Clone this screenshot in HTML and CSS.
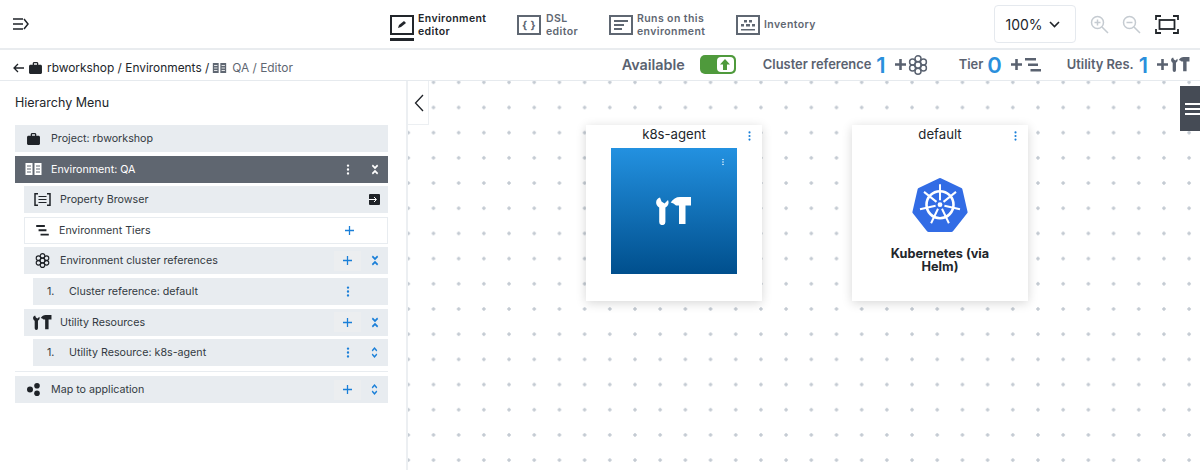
FILE: index.html
```html
<!doctype html>
<html lang="en">
<head>
    <meta charset="UTF-8">
    <title>Environment editor</title>
    <link rel="stylesheet" href="styles.css">
</head>
<body>
<svg class="defs" width="0" height="0">
    <symbol id="i-case" viewBox="0 0 14 13"><path d="M5 0h4l1 1v2h3l1 1v8l-1 1H1l-1-1V4l1-1h3V1zM5.400 1.300V3h3.200V1.300z" fill="currentColor" fill-rule="evenodd"/></symbol>
    <symbol id="i-env" viewBox="0 0 16 12"><path d="M0 0h7v12H0zM9 0h7v12H9z" fill="currentColor"/><path d="M1.500 3h4M1.500 6h4M1.500 9h4M10.500 3h4M10.500 6h4M10.500 9h4" stroke="var(--gap, #fff)" stroke-width="1"/></symbol>
    <symbol id="i-cluster" viewBox="0 0 20 20" fill="none" stroke="currentColor" stroke-width="1.500"><circle cx="10" cy="10" r="3.200"/><circle cx="10" cy="3.800" r="3"/><circle cx="10" cy="16.200" r="3"/><circle cx="4.600" cy="6.900" r="3"/><circle cx="15.400" cy="6.900" r="3"/><circle cx="4.600" cy="13.100" r="3"/><circle cx="15.400" cy="13.100" r="3"/></symbol>
    <symbol id="i-tiers" viewBox="0 0 16 14"><path d="M0 0h11v2.500H0zM3 5.500h10V8H3zM5.500 11H16v2.500H5.500z" fill="currentColor"/></symbol>
    <symbol id="i-tools" viewBox="0 0 36 28"><path d="M4 .5C-1 2-1 8 3.200 10.500V25a3.100 3.100 0 0 0 6.200 0V10.500C13 9 13 5 12 3L8.500 6.500 5.500 4.500zM14.700 5.500C17 2 20 0 24 0H35V8.500H29.500V27H23V8.500H20Q17.500 6 14.700 5.500z" fill="currentColor"/></symbol>
    <symbol id="i-plus" viewBox="0 0 12 12"><path d="M6 0v12M0 6h12" stroke="currentColor" stroke-width="1.700" fill="none"/></symbol>
    <symbol id="i-plus-bold" viewBox="0 0 12 12"><path d="M6 0v12M0 6h12" stroke="currentColor" stroke-width="2.800" fill="none"/></symbol>
    <symbol id="i-dots" viewBox="0 0 4 14"><circle cx="2" cy="2" r="1.500" fill="currentColor"/><circle cx="2" cy="7" r="1.500" fill="currentColor"/><circle cx="2" cy="12" r="1.500" fill="currentColor"/></symbol>
    <symbol id="i-collapse" viewBox="0 0 12 14"><path d="M2 1.500l4 3.500 4-3.500M2 12.500l4-3.500 4 3.500" stroke="currentColor" stroke-width="2.400" fill="none"/></symbol>
    <symbol id="i-expand" viewBox="0 0 12 14"><path d="M2 5L6 1.500 10 5M2 9l4 3.500L10 9" stroke="currentColor" stroke-width="2.200" fill="none"/></symbol>
</svg>

<header class="topbar">
    <svg class="menu-icon" width="16" height="12" viewBox="0 0 16 12"><path d="M0 1h10M0 6h10M0 11h10M11 1l4 5-4 5" stroke="#1f2328" stroke-width="1.500" fill="none"/></svg>
    <nav class="tabs">
        <a class="tab tab-active tab-env">
            <svg width="24" height="20" viewBox="0 0 24 20"><rect x="1" y="1" width="22" height="18" fill="none" stroke="currentColor" stroke-width="2"/><path d="M8 13l1-3 5-4 2 2-5 4z" fill="currentColor"/></svg>
            <span>Environment<br>editor</span>
        </a>
        <a class="tab tab-dsl">
            <svg width="24" height="20" viewBox="0 0 24 20"><rect x="1" y="1" width="22" height="18" fill="none" stroke="currentColor" stroke-width="2"/><text x="12" y="14" text-anchor="middle" class="brace">{ }</text></svg>
            <span>DSL<br>editor</span>
        </a>
        <a class="tab tab-runs">
            <svg width="24" height="20" viewBox="0 0 24 20"><rect x="1" y="1" width="22" height="18" fill="none" stroke="currentColor" stroke-width="2"/><path d="M5 6h14M5 10h10M5 14h8" stroke="currentColor" stroke-width="2"/></svg>
            <span>Runs on this<br>environment</span>
        </a>
        <a class="tab tab-inv">
            <svg width="24" height="20" viewBox="0 0 24 20"><rect x="1" y="1" width="22" height="18" fill="none" stroke="currentColor" stroke-width="2"/><path d="M8 5h3v2.500H8zM13 5h3v2.500h-3zM5 9h3v2.500H5zM10 9h4v2.500h-4zM16 9h3v2.500h-3zM5 14h14v1.500H5z" fill="currentColor"/></svg>
            <span>Inventory</span>
        </a>
    </nav>
    <div class="zoom-tools">
        <div class="zoom-select">100%
            <svg width="11" height="7" viewBox="0 0 11 7"><path d="M1 1l4.500 4.500L10 1" stroke="#1f2328" stroke-width="1.600" fill="none"/></svg>
        </div>
        <svg class="zoom-btn" width="19" height="19" viewBox="0 0 19 19"><circle cx="7.500" cy="7.500" r="6" fill="none" stroke="currentColor" stroke-width="1.500"/><path d="M12 12l6 6M7.500 4.500v6M4.500 7.500h6" stroke="currentColor" stroke-width="1.500"/></svg>
        <svg class="zoom-btn" width="19" height="19" viewBox="0 0 19 19"><circle cx="7.500" cy="7.500" r="6" fill="none" stroke="currentColor" stroke-width="1.500"/><path d="M12 12l6 6M4.500 7.500h6" stroke="currentColor" stroke-width="1.500"/></svg>
        <svg class="fit-btn" width="24" height="19" viewBox="0 0 24 19"><path d="M1 5V1h5M18 1h5v4M23 14v4h-5M6 18H1v-4" fill="none" stroke="currentColor" stroke-width="1.800"/><rect x="4.500" y="5" width="15" height="9" fill="none" stroke="currentColor" stroke-width="1.800"/></svg>
    </div>
</header>

<div class="subbar">
    <div class="crumbs">
        <svg class="back" width="11" height="10" viewBox="0 0 11 10"><path d="M5 1L1 5l4 4M1 5h10" stroke="#1f2328" stroke-width="1.300" fill="none"/></svg>
        <svg class="ic-case" width="13" height="12"><use href="#i-case"/></svg>
        <span>rbworkshop / Environments /</span>
        <svg class="ic-env-crumb" width="15" height="10"><use href="#i-env"/></svg>
        <span class="crumb-muted">QA / Editor</span>
    </div>
    <div class="stats">
        <span class="avail">Available</span>
        <span class="toggle"><span class="knob"><svg width="10" height="11" viewBox="0 0 10 11"><path d="M5 0l5 5.500H7V11H3V5.500H0z" fill="#4f9a3c"/></svg></span></span>
        <span class="stat">Cluster reference</span>
        <b class="count">1</b>
        <svg class="stat-plus plus-tight" width="11" height="11"><use href="#i-plus-bold"/></svg>
        <svg class="stat-ic" width="20" height="20"><use href="#i-cluster"/></svg>
        <span class="stat stat-tier">Tier</span>
        <b class="count count-tier">0</b>
        <svg class="stat-plus" width="11" height="11"><use href="#i-plus-bold"/></svg>
        <svg class="stat-ic" width="16" height="14"><use href="#i-tiers"/></svg>
        <span class="stat stat-util">Utility Res.</span>
        <b class="count">1</b>
        <svg class="stat-plus" width="11" height="11"><use href="#i-plus-bold"/></svg>
        <svg class="stat-ic" width="19" height="15"><use href="#i-tools"/></svg>
    </div>
</div>

<main class="workspace">
    <aside class="sidebar">
        <h2 class="side-title">Hierarchy Menu</h2>
        <ul class="tree">
            <li class="row lv0">
                <span class="ic-slot"><svg width="13" height="12"><use href="#i-case"/></svg></span>
                <span>Project: rbworkshop</span>
            </li>
            <li class="row lv0 row-dark">
                <span class="ic-slot"><svg width="17" height="12"><use href="#i-env"/></svg></span>
                <span>Environment: QA</span>
                <span class="acts">
                    <span class="act"><svg width="4" height="11" viewBox="0 0 4 14"><use href="#i-dots"/></svg></span>
                    <span class="act"><svg width="8" height="11" viewBox="0 0 12 14" preserveAspectRatio="none"><use href="#i-collapse"/></svg></span>
                </span>
            </li>
            <li class="row lv1">
                <span class="ic-slot"><svg width="17" height="13" viewBox="0 0 17 13"><path d="M4 .8H1v11.400h3M13 .8h3v11.400h-3" fill="none" stroke="currentColor" stroke-width="1.500"/><path d="M4.500 3.500h8M4.500 6.500h8M4.500 9.500h8" stroke="currentColor"/></svg></span>
                <span>Property Browser</span>
                <span class="acts">
                    <span class="act"></span>
                    <span class="act"><svg width="11" height="11" viewBox="0 0 11 11"><rect width="11" height="11" rx="1" fill="#1f2328"/><path d="M0 5.500h7M5 3l2.500 2.500L5 8" stroke="#fff" fill="none"/></svg></span>
                </span>
            </li>
            <li class="row lv1 row-white">
                <span class="ic-slot"><svg width="13" height="11"><use href="#i-tiers"/></svg></span>
                <span>Environment Tiers</span>
                <span class="acts acts-tier">
                    <span class="act blue"><svg width="9" height="9"><use href="#i-plus"/></svg></span>
                </span>
            </li>
            <li class="row lv1">
                <span class="ic-slot"><svg width="15" height="15"><use href="#i-cluster"/></svg></span>
                <span>Environment cluster references</span>
                <span class="acts">
                    <span class="act blue act-hover"><svg width="9" height="9"><use href="#i-plus"/></svg></span>
                    <span class="act blue"><svg width="8" height="11" viewBox="0 0 12 14" preserveAspectRatio="none"><use href="#i-collapse"/></svg></span>
                </span>
            </li>
            <li class="row lv2">
                <span class="num">1.</span>
                <span>Cluster reference: default</span>
                <span class="acts">
                    <span class="act blue"><svg width="4" height="11" viewBox="0 0 4 14"><use href="#i-dots"/></svg></span>
                    <span class="act"></span>
                </span>
            </li>
            <li class="row lv1">
                <span class="ic-slot"><svg width="19" height="15"><use href="#i-tools"/></svg></span>
                <span>Utility Resources</span>
                <span class="acts">
                    <span class="act blue act-hover"><svg width="9" height="9"><use href="#i-plus"/></svg></span>
                    <span class="act blue"><svg width="8" height="11" viewBox="0 0 12 14" preserveAspectRatio="none"><use href="#i-collapse"/></svg></span>
                </span>
            </li>
            <li class="row lv2">
                <span class="num">1.</span>
                <span>Utility Resource: k8s-agent</span>
                <span class="acts">
                    <span class="act blue"><svg width="4" height="11" viewBox="0 0 4 14"><use href="#i-dots"/></svg></span>
                    <span class="act blue"><svg width="7" height="11" viewBox="0 0 12 14" preserveAspectRatio="none"><use href="#i-expand"/></svg></span>
                </span>
            </li>
            <li class="tree-sep"></li>
            <li class="row lv0">
                <span class="ic-slot"><svg width="13" height="13" viewBox="0 0 13 13"><circle cx="3" cy="6.500" r="3" fill="currentColor"/><circle cx="10" cy="2.800" r="2.800" fill="currentColor"/><circle cx="10" cy="10.200" r="2.800" fill="currentColor"/></svg></span>
                <span>Map to application</span>
                <span class="acts">
                    <span class="act blue act-hover"><svg width="9" height="9"><use href="#i-plus"/></svg></span>
                    <span class="act blue"><svg width="7" height="11" viewBox="0 0 12 14" preserveAspectRatio="none"><use href="#i-expand"/></svg></span>
                </span>
            </li>
        </ul>
    </aside>

    <section class="canvas">
        <button class="side-toggle"><svg width="10" height="18" viewBox="0 0 10 18"><path d="M9 1L1.500 9 9 17" stroke="#1f2328" stroke-width="1.300" fill="none"/></svg></button>
        <button class="panel-tab"><i></i><i></i><i></i></button>

        <div class="node node-agent">
            <div class="node-title">k8s-agent</div>
            <svg class="node-dots" width="3" height="10" viewBox="0 0 4 14"><use href="#i-dots"/></svg>
            <div class="agent-tile">
                <svg class="tile-dots" width="2" height="8" viewBox="0 0 4 14"><use href="#i-dots"/></svg>
                <svg width="36" height="28"><use href="#i-tools"/></svg>
            </div>
        </div>

        <div class="node node-default">
            <div class="node-title">default</div>
            <svg class="node-dots" width="3" height="10" viewBox="0 0 4 14"><use href="#i-dots"/></svg>
            <div class="helm">
                <svg width="58" height="56" viewBox="0 0 58 56">
                    <polygon points="29,3 49.500,12.900 54.600,35.100 40.400,52.900 17.600,52.900 3.400,35.100 8.500,12.900" fill="#326ce5" stroke="#326ce5" stroke-width="4" stroke-linejoin="round"/>
                    <circle cx="29" cy="27.700" r="13.500" fill="none" stroke="#fff" stroke-width="2.600"/>
                    <path d="M29 23.200V7.200M32.500 24.900L45 14.900M33.400 28.700L49 32.300M31 31.800L37.900 46.200M27 31.800L20.100 46.200M24.600 28.700L9 32.300M25.500 24.900L13 14.900" stroke="#fff" stroke-width="2" fill="none"/>
                    <circle cx="29" cy="27.700" r="2.400" fill="#fff"/>
                </svg>
                <div class="helm-name">Kubernetes (via Helm)</div>
            </div>
        </div>
    </section>
</main>
</body>
</html>
```

FILE: styles.css
```css
* {
    box-sizing: border-box;
}
html, body {
    margin: 0;
    height: 470px;
    overflow: hidden;
}
body {
    font-family: Inter, "Liberation Sans", sans-serif;
    color: #22262b;
    background: #fff;
}
.defs {
    position: absolute;
}

/* top bar */
.topbar {
    height: 50px;
    display: flex;
    align-items: center;
    border-bottom: 2px solid #e9ecef;
    padding-left: 13px;
}
.menu-icon {
    flex: none;
}
.tabs {
    display: flex;
    margin-left: 361px;
    height: 48px;
}
.tab {
    display: flex;
    align-items: center;
    gap: 4px;
    height: 48px;
    padding-top: 1px;
    font-size: 10.5px;
    line-height: 13px;
    font-weight: 600;
    letter-spacing: .4px;
    color: #5f6772;
    position: relative;
}
.tab svg {
    flex: none;
}
.tab-env {
    width: 127px;
}
.tab-dsl {
    width: 92px;
}
.tab-dsl span {
    margin-left: 1px;
}
.tab-runs {
    width: 127px;
}
.tab-active {
    color: #22262b;
}
.tab-active::after {
    content: "";
    position: absolute;
    left: 0;
    bottom: 7px;
    width: 24px;
    height: 3px;
    background: #22262b;
}
.brace {
    font-size: 11px;
    font-weight: 700;
    fill: currentColor;
}
.zoom-tools {
    margin-left: auto;
    display: flex;
    align-items: center;
    padding-right: 21px;
}
.zoom-select {
    width: 82px;
    height: 38px;
    border: 1px solid #e5e9ee;
    border-radius: 4px;
    display: flex;
    align-items: center;
    justify-content: center;
    gap: 6px;
    padding-right: 5px;
    font-size: 14px;
    margin-right: 14px;
}
.zoom-btn {
    color: #c5cbd1;
    margin-right: 13px;
}
.fit-btn {
    color: #22262b;
    margin-left: 1px;
}

/* breadcrumb + counters */
.subbar {
    height: 31px;
    display: flex;
    align-items: center;
    justify-content: space-between;
    border-bottom: 1px solid #e6eaee;
    padding: 0 10px 1px 13px;
}
.crumbs {
    display: flex;
    align-items: center;
    font-size: 11.9px;
    margin-top: 6px;
}
.back {
    margin-right: 5px;
}
.ic-case {
    margin-right: 5px;
}
.ic-env-crumb {
    color: #5f6772;
    margin: 0 5px 0 3px;
}
.crumb-muted {
    color: #5f6772;
}
.stats {
    display: flex;
    align-items: center;
    color: #5a6270;
}
.avail {
    font-size: 14.400px;
    font-weight: 600;
    margin-right: 15px;
}
.toggle {
    width: 36px;
    height: 19px;
    border-radius: 5px;
    background: #4f9a3c;
    display: flex;
    justify-content: flex-end;
    padding: 2px;
    margin-right: 27px;
}
.knob {
    width: 17px;
    background: #fff;
    border-radius: 4px;
    display: flex;
    align-items: center;
    justify-content: center;
}
.stat {
    font-size: 12.9px;
    font-weight: 600;
}
.count {
    color: #2a8fdc;
    font-size: 22px;
    line-height: 24px;
    font-weight: 600;
    margin: 0 9px 0 5px;
}
.count-tier {
    margin-left: 4px;
}
.stat-plus {
    margin-right: 3px;
}
.plus-tight {
    margin-right: 2px;
}
.stat-tier {
    margin-left: 31px;
}
.stat-util {
    margin-left: 26px;
}

/* main area */
.workspace {
    display: flex;
    height: 389px;
}
.sidebar {
    width: 408px;
    flex: none;
    border-right: 2px solid #eceff2;
    padding: 0 18px 0 15px;
}
.side-title {
    margin: 14px 0 14px;
    font-size: 12.5px;
    line-height: 16px;
    font-weight: 400;
}
.tree {
    list-style: none;
    margin: 0;
    padding: 0;
}
.row {
    height: 27px;
    margin-bottom: 3.6px;
    display: flex;
    align-items: center;
    background: #e8ecf0;
    font-size: 10.7px;
    color: #333a42;
}
.lv1 {
    margin-left: 9px;
}
.lv2 {
    margin-left: 18px;
    padding-left: 14px;
}
.ic-slot {
    width: 36px;
    flex: none;
    display: flex;
    align-items: center;
    justify-content: center;
    color: #1f2328;
}
.num {
    width: 22px;
}
.row-dark {
    background: #5f6670;
    color: #fff;
    --gap: #5f6670;
}
.row-dark .ic-slot {
    color: #fff;
}
.row-white {
    background: #fff;
    border: 1px solid #e8ecf0;
}
.row-white .ic-slot {
    width: 34px;
}
.acts {
    margin-left: auto;
    display: flex;
    height: 100%;
    align-items: center;
}
.act {
    width: 27px;
    height: 20px;
    display: flex;
    align-items: center;
    justify-content: center;
}
.acts-tier {
    margin-right: 24px;
}
.blue {
    color: #1a7fd8;
}
.act-hover {
    background: #eceef0;
}
.tree-sep {
    height: 1px;
    background: #e8ecf0;
    margin: 5px 0 4px;
}

/* canvas */
.canvas {
    flex: 1;
    position: relative;
    background-image: radial-gradient(circle at center, #c3cad2 1.4px, transparent 1.9px);
    background-size: 25.2px 25.2px;
    background-position: -12.3px -11.3px;
    overflow: hidden;
}
.side-toggle {
    position: absolute;
    left: 0;
    top: 0;
    width: 21px;
    height: 44px;
    padding: 0 0 0 2px;
    background: #fff;
    border: 1px solid #eceff2;
    border-width: 0 1px 1px 0;
    display: flex;
    align-items: center;
    justify-content: center;
}
.panel-tab {
    position: absolute;
    right: 0;
    top: 5px;
    width: 20px;
    height: 45px;
    padding: 0 0 0 5px;
    border: 0;
    background: #454b55;
    display: flex;
    flex-direction: column;
    justify-content: center;
    gap: 3px;
}
.panel-tab i {
    display: block;
    width: 15px;
    height: 2px;
    background: #fff;
}
.node {
    position: absolute;
    top: 44px;
    width: 176px;
    height: 176px;
    background: #fff;
    box-shadow: 0 2px 10px rgba(0, 0, 0, .16);
}
.node-agent {
    left: 178px;
}
.node-default {
    left: 444px;
}
.node-title {
    text-align: center;
    font-size: 13.2px;
    line-height: 18px;
}
.node-dots {
    position: absolute;
    right: 11px;
    top: 6px;
    color: #1a7fd8;
}
.agent-tile {
    width: 126px;
    height: 126px;
    margin: 5px auto 0;
    position: relative;
    background: linear-gradient(#2391e0, #004f8d);
    color: #fff;
    display: flex;
    align-items: center;
    justify-content: center;
}
.tile-dots {
    position: absolute;
    right: 13px;
    top: 10px;
    color: #fff;
}
.helm {
    display: flex;
    flex-direction: column;
    align-items: center;
    padding-top: 34px;
}
.helm-name {
    width: 112px;
    margin-top: 14px;
    text-align: center;
    font-size: 12.7px;
    line-height: 13px;
    font-weight: 700;
}
```
